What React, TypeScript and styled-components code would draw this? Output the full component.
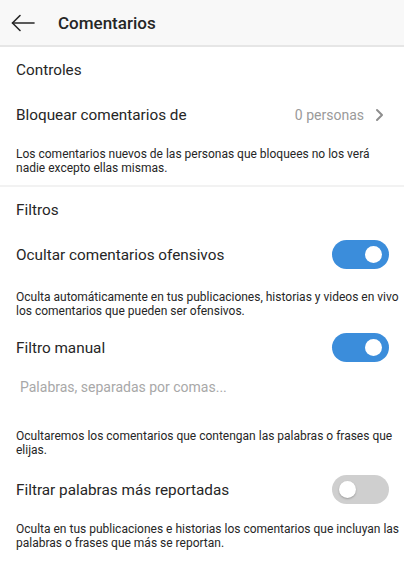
import React, { useState } from "react";
import styled, { createGlobalStyle } from "styled-components";

const GlobalStyle = createGlobalStyle`
  html, body {
    margin: 0;
    padding: 0;
    background: #ffffff;
  }
  body {
    font-family: Roboto, "Noto Sans", "Liberation Sans", sans-serif;
    color: #262626;
    -webkit-font-smoothing: antialiased;
  }
`;

const Screen = styled.div`
  width: 404px;
  min-height: 562px;
  background: #ffffff;
  display: flex;
  flex-direction: column;
`;

const Header = styled.header`
  height: 45px;
  background: #f8f8f8;
  border-bottom: 2px solid #e6e6e6;
  display: flex;
  align-items: center;
  padding-left: 11px;
  gap: 23px;
`;

const BackButton = styled.button`
  border: 0;
  background: none;
  padding: 0;
  width: 24px;
  height: 24px;
  display: flex;
  align-items: center;
  justify-content: center;
  color: #262626;
`;

const Title = styled.h1`
  margin: 0;
  font-size: 17px;
  font-weight: 500;
  color: #262626;
`;

const Section = styled.section<{ $divider?: boolean }>`
  display: flex;
  flex-direction: column;
  border-bottom: ${(p) => (p.$divider ? "2px solid #f2f2f2" : "none")};
`;

const SectionTitle = styled.h2`
  margin: 0;
  padding: 0 16px;
  height: 45px;
  font-size: 15.3px;
  font-weight: 400;
  color: #262626;
  display: flex;
  align-items: center;
`;

const Row = styled.div`
  display: flex;
  align-items: center;
  justify-content: space-between;
  height: 45px;
  padding: 0 15px 0 16px;
`;

const LinkRow = styled(Row)`
  padding-right: 20px;
`;

const RowLabel = styled.span`
  font-size: 15.3px;
  color: #262626;
`;

const RowValue = styled.span`
  display: flex;
  align-items: center;
  gap: 11px;
  font-size: 14px;
  color: #9a9a9a;
`;

// helper text under a setting; the insets vary a little per block
const Note = styled.p<{ $top?: number; $bottom?: number; $right?: number }>`
  margin: 0;
  padding: ${(p) => p.$top ?? 10}px ${(p) => p.$right ?? 2}px
    ${(p) => p.$bottom ?? 10}px 16px;
  font-size: 12px;
  line-height: 14px;
  color: #262626;
`;

const WordsInput = styled.input`
  border: 0;
  outline: none;
  margin: 0 16px 0 20px;
  padding: 0;
  height: 34px;
  font-family: inherit;
  font-size: 14px;
  color: #262626;
  background: transparent;
  &::placeholder {
    color: #a8a8a8;
  }
`;

const Spacer = styled.div<{ $h: number }>`
  height: ${(p) => p.$h}px;
`;

const Track = styled.button<{ $on: boolean }>`
  position: relative;
  width: 57px;
  height: 29px;
  border: 0;
  padding: 0;
  border-radius: 15px;
  background: ${(p) => (p.$on ? "#3b8ddb" : "#cfcfcf")};
  cursor: pointer;
`;

const Knob = styled.span<{ $on: boolean }>`
  position: absolute;
  top: 6px;
  left: ${(p) => (p.$on ? "33px" : "7px")};
  width: 17px;
  height: 17px;
  border-radius: 50%;
  background: #ffffff;
  box-shadow: ${(p) => (p.$on ? "none" : "0 1px 2px rgba(0,0,0,0.25)")};
`;

const Toggle: React.FC<{ initial: boolean }> = ({ initial }) => {
  const [on, setOn] = useState(initial);
  return (
    <Track $on={on} onClick={() => setOn(!on)} aria-pressed={on}>
      <Knob $on={on} />
    </Track>
  );
};

const BackArrow = () => (
  <svg width="24" height="24" viewBox="0 0 24 24" fill="none" stroke="currentColor" strokeWidth="1.6" strokeLinecap="round" strokeLinejoin="round">
    <path d="M23 12H1.5" />
    <path d="M9 4.5L1.5 12L9 19.5" />
  </svg>
);

const Chevron = () => (
  <svg width="9" height="14" viewBox="0 0 9 14" fill="none" stroke="#8e8e8e" strokeWidth="2" strokeLinecap="round" strokeLinejoin="round">
    <path d="M2 2l5 5-5 5" />
  </svg>
);

export default function App() {
  return (
    <>
      <GlobalStyle />
      <Screen>
        <Header>
          <BackButton aria-label="Atrás">
            <BackArrow />
          </BackButton>
          <Title>Comentarios</Title>
        </Header>

        <Section $divider>
          <SectionTitle>Controles</SectionTitle>
          <LinkRow>
            <RowLabel>Bloquear comentarios de</RowLabel>
            <RowValue>
              0 personas
              <Chevron />
            </RowValue>
          </LinkRow>
          <Note $right={20}>
            Los comentarios nuevos de las personas que bloquees no los verá nadie excepto ellas mismas.
          </Note>
        </Section>

        <Section>
          <SectionTitle>Filtros</SectionTitle>
          <Row>
            <RowLabel>Ocultar comentarios ofensivos</RowLabel>
            <Toggle initial={true} />
          </Row>
          <Note $top={13} $bottom={7}>
            Oculta automáticamente en tus publicaciones, historias y videos en vivo los comentarios que pueden ser ofensivos.
          </Note>
          <Row>
            <RowLabel>Filtro manual</RowLabel>
            <Toggle initial={true} />
          </Row>
          <WordsInput placeholder="Palabras, separadas por comas..." />
          <Spacer $h={15} />
          <Note>
            Ocultaremos los comentarios que contengan las palabras o frases que elijas.
          </Note>
          <Row>
            <RowLabel>Filtrar palabras más reportadas</RowLabel>
            <Toggle initial={false} />
          </Row>
          <Note>
            Oculta en tus publicaciones e historias los comentarios que incluyan las palabras o frases que más se reportan.
          </Note>
        </Section>
      </Screen>
    </>
  );
}
